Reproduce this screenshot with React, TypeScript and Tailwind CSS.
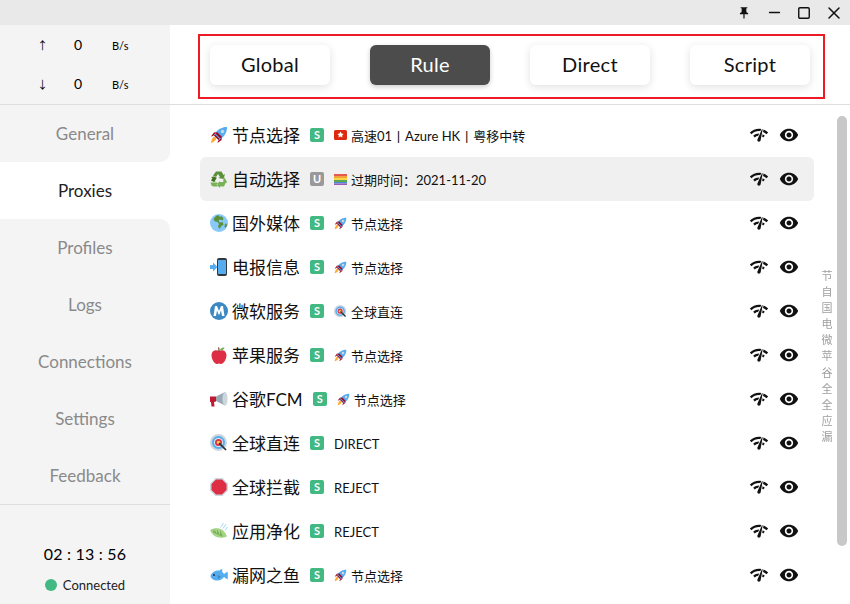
import { MdNetworkCheck, MdVisibility, MdPushPin } from 'react-icons/md'
import { Minus, Square, X } from 'lucide-react'
import type { ReactNode } from 'react'

const font = "font-['Lato','Noto_Sans_CJK_SC',sans-serif]"

// twemoji-like icons
const Rocket = ({ size = 18 }: { size?: number }) => (
  <svg width={size} height={size} viewBox="0 0 36 36">
    <path fill="#FFAC33" d="M2 34s1-9 5-12c3-2 7 2 5 5-3 5-10 7-10 7z" />
    <path fill="#A0041E" d="M6 20l-4 1 6-8 6-1zM16 30l-1 4 8-6 1-6z" />
    <path fill="#55ACEE" d="M34 2s-11-1-20 8c-4 4-6 9-6 9l9 9s5-2 9-6c9-9 8-20 8-20z" />
    <path fill="#A0041E" d="M10 17l9 9-2 2-9-9z" />
    <path fill="#A0041E" d="M14 12l10 10-3 3-10-10z" />
    <circle cx="25" cy="11" r="3.5" fill="#CCD6DD" />
  </svg>
)
const Recycle = () => (
  <svg width="18" height="18" viewBox="0 0 36 36">
    <path fill="#5C913B" d="M12 3h11l4 7 3-2-3 10-10-2 3-2-4-6-4 6-6-3z" />
    <path fill="#3E721D" d="M8 13l6 3-1-1 1 0-5 8 3 0-4 1-6-3 3-5-3-2z" />
    <path fill="#77B255" d="M1 25l2 6 3 2h9v-8zM20 24h12l-4 9h-8v3l-7-7 7-7z" />
    <path fill="#77B255" d="M28 14l5 8 1 4-8-3z" />
  </svg>
)
const Globe = () => (
  <svg width="18" height="18" viewBox="0 0 36 36">
    <circle cx="18" cy="18" r="18" fill="#88C9F9" />
    <path fill="#5C913B" d="M16 2c-5 2-7 5-9 9l3 4 5 1 3 4-2 5 3 5 3-5 5-4-2-5-6 1-2-4 3-2 5 2 2-4-4-5-3 2z" />
    <path fill="#5C913B" d="M30 20l3-1 1 4-3 5-2-3z" />
  </svg>
)
const Phone = () => (
  <svg width="18" height="18" viewBox="0 0 36 36">
    <rect x="14" y="0" width="20" height="36" rx="4" fill="#31373D" />
    <rect x="16" y="4" width="16" height="28" fill="#55ACEE" />
    <path fill="#55ACEE" d="M0 14h6V9l9 9-9 9v-5H0z" />
  </svg>
)
const Metro = () => (
  <svg width="18" height="18" viewBox="0 0 36 36">
    <circle cx="18" cy="18" r="18" fill="#3B88C3" />
    <path fill="#fff" d="M10 8h4l4 10 4-10h4l3 20h-5l-2-11-3 8h-2l-3-8-2 11H7z" />
  </svg>
)
const Apple = () => (
  <svg width="18" height="18" viewBox="0 0 36 36">
    <path fill="#DD2E44" d="M18 10c-4-3-14-3-15 8 0 9 6 18 11 18 2 0 3-1 4-1s2 1 4 1c5 0 11-9 11-18-1-11-11-11-15-8z" />
    <path fill="#77B255" d="M19 9c2-5 6-6 10-6-1 4-5 7-10 6z" />
    <path fill="#662113" d="M17 11c0-4 0-6-1-8h2c1 2 1 4 1 8z" />
  </svg>
)
const Megaphone = () => (
  <svg width="18" height="18" viewBox="0 0 36 36">
    <path fill="#BE1931" d="M0 13h12v10l-4 1 1 9H3l-1-9H0z" />
    <path fill="#99AAB5" d="M12 13l18-9v27l-18-9z" />
    <path fill="#CCD6DD" d="M30 4c3 0 5 6 5 14s-2 13-5 13-5-6-5-13 2-14 5-14z" />
  </svg>
)
const Target = ({ size = 18 }: { size?: number }) => (
  <svg width={size} height={size} viewBox="0 0 36 36">
    <circle cx="17" cy="17" r="17" fill="#CCD6DD" />
    <circle cx="17" cy="17" r="13" fill="#55ACEE" />
    <circle cx="17" cy="17" r="9" fill="#E1E8ED" />
    <circle cx="17" cy="17" r="7" fill="#DD2E44" />
    <circle cx="17" cy="17" r="3.5" fill="#FFCC4D" />
    <path stroke="#292F33" strokeWidth="3.5" d="M18 18l14 14" />
  </svg>
)
const Stop = () => (
  <svg width="18" height="18" viewBox="0 0 36 36">
    <path fill="#CCD6DD" d="M11 0h14l11 11v14L25 36H11L0 25V11z" />
    <path fill="#DD2E44" d="M12 3h12l9 9v12l-9 9H12l-9-9V12z" />
  </svg>
)
const Leaf = () => (
  <svg width="18" height="18" viewBox="0 0 36 36">
    <path fill="#A6D388" d="M0 16c8-5 18-5 25 0 4 3 7 7 9 13-10 4-20 3-26-2C4 24 2 20 0 16z" />
    <path fill="#77B255" d="M6 15l4 6-1-7 5 10 0-10 6 13 0-11 6 14-20-9z" />
    <path stroke="#88C9F9" strokeWidth="1.5" fill="none" d="M21 11l6-9M26 13l6-9M30 17l5-7" />
  </svg>
)
const Fish = () => (
  <svg width="18" height="18" viewBox="0 0 36 36">
    <path fill="#55ACEE" d="M1 20C3 12 12 8 19 9c3-3 5-3 6-2l-1 4c2 2 3 4 4 5l7-5c1 6 1 11 0 16l-7-5c-3 5-9 7-13 7-8 0-13-4-14-9z" />
    <path fill="#3B88C3" d="M15 18l7 3-6 5z" />
    <circle cx="8" cy="18" r="2" fill="#292F33" />
  </svg>
)
const HkFlag = () => (
  <svg width="13" height="10" viewBox="0 0 13 10">
    <rect width="13" height="10" rx="1.5" fill="#DE2910" />
    <path fill="#fff" d="M6.5 1.6l1 2 2.1.3-1.5 1.5.4 2.1-2-1-2 1 .4-2.1-1.5-1.5 2.1-.3z" />
  </svg>
)
const RainbowFlag = () => (
  <svg width="13" height="11" viewBox="0 0 13 11">
    <rect y="0" width="13" height="2" fill="#E4584F" />
    <rect y="2" width="13" height="2" fill="#F2A33A" />
    <rect y="4" width="13" height="2" fill="#F5D64A" />
    <rect y="6" width="13" height="2" fill="#5BA84F" />
    <rect y="8" width="13" height="1.5" fill="#4A8BD8" />
    <rect y="9.5" width="13" height="1.5" fill="#9C5BB5" />
  </svg>
)

interface Row {
  icon: ReactNode
  name: string
  badge: string
  flag?: ReactNode
  now: string
  active?: boolean
}

const rows: Row[] = [
  { icon: <Rocket />, name: '节点选择', badge: 'S', flag: <HkFlag />, now: '高速01丨Azure HK丨粤移中转' },
  { icon: <Recycle />, name: '自动选择', badge: 'U', flag: <RainbowFlag />, now: '过期时间：2021-11-20', active: true },
  { icon: <Globe />, name: '国外媒体', badge: 'S', flag: <Rocket size={13} />, now: '节点选择' },
  { icon: <Phone />, name: '电报信息', badge: 'S', flag: <Rocket size={13} />, now: '节点选择' },
  { icon: <Metro />, name: '微软服务', badge: 'S', flag: <Target size={13} />, now: '全球直连' },
  { icon: <Apple />, name: '苹果服务', badge: 'S', flag: <Rocket size={13} />, now: '节点选择' },
  { icon: <Megaphone />, name: '谷歌FCM', badge: 'S', flag: <Rocket size={13} />, now: '节点选择' },
  { icon: <Target />, name: '全球直连', badge: 'S', now: 'DIRECT' },
  { icon: <Stop />, name: '全球拦截', badge: 'S', now: 'REJECT' },
  { icon: <Leaf />, name: '应用净化', badge: 'S', now: 'REJECT' },
  { icon: <Fish />, name: '漏网之鱼', badge: 'S', flag: <Rocket size={13} />, now: '节点选择' },
]

const navItems = ['General', 'Proxies', 'Profiles', 'Logs', 'Connections', 'Settings', 'Feedback']
const modes = ['Global', 'Rule', 'Direct', 'Script']
const indexChars = ['节', '自', '国', '电', '微', '苹', '谷', '全', '全', '应', '漏']

function Traffic({ arrow }: { arrow: string }) {
  return (
    <div className="flex items-center h-[39px] text-black">
      <span className="w-[56px] pl-[29px] pt-[2px] text-center text-[11px] text-black font-['Noto_Sans_CJK_SC',sans-serif]">{arrow}</span>
      <span className="w-[44px] text-center text-[14px]">0</span>
      <span className="pt-[3px] text-[11px] ml-[12px]">B/s</span>
    </div>
  )
}

export default function App() {
  return (
    <div className={`w-[850px] h-[604px] overflow-hidden flex flex-col bg-white ${font}`}>
      {/* titlebar */}
      <div className="h-[25px] shrink-0 bg-[#e9e9e9] flex items-center justify-end pr-[1px] text-[#111]">
        <div className="w-[30px] flex justify-center"><MdPushPin size={14} /></div>
        <div className="w-[30px] flex justify-center"><Minus size={17} strokeWidth={2.1} /></div>
        <div className="w-[30px] flex justify-center"><Square size={14} strokeWidth={2.4} /></div>
        <div className="w-[30px] flex justify-center"><X size={20} strokeWidth={1.8} /></div>
      </div>

      <div className="flex flex-1 min-h-0">
        {/* sidebar */}
        <div className="w-[170px] shrink-0 flex flex-col bg-white">
          <div className="bg-[#f4f4f4] h-[80px] border-b border-[#dedede]">
            <Traffic arrow="↑" />
            <Traffic arrow="↓" />
          </div>
          <div className="flex flex-col">
            {navItems.map((item, i) => (
              <div
                key={item}
                className={`h-[57px] flex items-center justify-center pt-[1px] text-[17px] ${
                  item === 'Proxies' ? 'bg-white text-[#222]' : 'bg-[#f4f4f4] text-[#8a8a8a]'
                } ${i === 0 ? 'rounded-br-[10px]' : ''} ${i === 2 ? 'rounded-tr-[10px]' : ''}`}
              >
                {item}
              </div>
            ))}
          </div>
          <div className="flex-1 bg-[#f4f4f4] border-t border-[#dedede] flex flex-col items-center pt-[38px]">
            <div className="text-[16px] leading-[22px] tracking-[0.2px] text-black">02 : 13 : 56</div>
            <div className="flex items-center gap-[6px] mt-[12px] text-[13px] leading-[16px] text-[#222]">
              <span className="w-3 h-3 rounded-full bg-[#42b883]" />
              Connected
            </div>
          </div>
        </div>

        {/* main */}
        <div className="flex-1 relative min-w-0">
          <div className="h-[80px] border-b border-[#dedede] pt-[9px] pl-[28px]">
            <div className="w-[627px] h-[65px] border-2 border-[#ed1c24] flex items-start pt-[9px] pl-[10px] gap-[40px]">
              {modes.map((m) => (
                <div
                  key={m}
                  className={`w-[120px] h-[40px] pb-[2px] rounded-[6px] flex items-center justify-center text-[20px] tracking-[0.3px] ${
                    m === 'Rule'
                      ? 'bg-[#4c4c4c] text-white shadow-[0_2px_5px_rgba(0,0,0,0.2)]'
                      : 'bg-white text-[#111] shadow-[0_2px_8px_rgba(0,0,0,0.12)]'
                  }`}
                >
                  {m}
                </div>
              ))}
            </div>
          </div>

          <div className="pt-[8px] pl-[30px] w-[644px]">
            {rows.map((r) => (
              <div
                key={r.name}
                className={`h-[44px] flex items-center pl-[10px] pr-[15px] rounded-[6px] ${r.active ? 'bg-[#f0f0f0]' : ''}`}
              >
                <span className="w-[18px] h-[18px] flex shrink-0 mr-[4px]">{r.icon}</span>
                <span className="pt-[2px] text-[17px] text-[#111] whitespace-nowrap">{r.name}</span>
                <span
                  className={`ml-[10px] w-[14px] h-[14px] rounded-[2px] flex items-center justify-center text-[11px] font-bold text-white ${
                    r.badge === 'U' ? 'bg-[#999]' : 'bg-[#42b883]'
                  }`}
                >
                  {r.badge}
                </span>
                {r.flag && <span className="ml-[10px] flex shrink-0">{r.flag}</span>}
                <span className={`pt-[3px] text-[13px] text-[#111] whitespace-nowrap ${r.flag ? 'ml-[4px]' : 'ml-[10px]'}`}>{r.now}</span>
                <span className="ml-auto flex items-center gap-[10px] text-[#111]">
                  <MdNetworkCheck size={20} />
                  <MdVisibility size={20} />
                </span>
              </div>
            ))}
          </div>

          {/* scrollbar + group index overlay */}
          <div className="absolute left-[667px] top-[91px] w-[10px] h-[430px] rounded-full bg-[#c8c8c8]" />
          <div className="absolute left-[651px] top-[243px] flex flex-col items-center w-[12px] text-[11px] leading-[16.1px] text-black opacity-40 [will-change:opacity]">
            {indexChars.map((c, i) => (
              <span key={i}>{c}</span>
            ))}
          </div>
        </div>
      </div>
    </div>
  )
}
